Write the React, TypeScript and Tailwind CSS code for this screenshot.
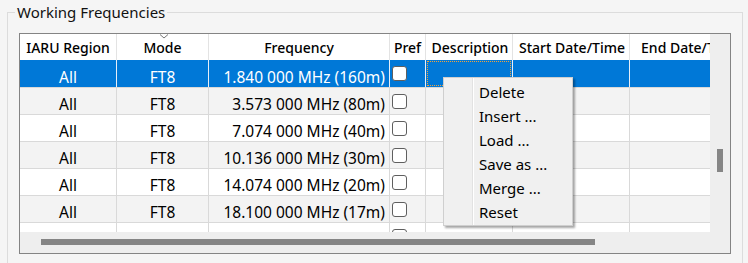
import React from "react";

const cols = [97, 92, 181, 36, 87, 117, 120];
const headers = ["IARU Region", "Mode", "Frequency", "Pref", "Description", "Start Date/Time", "End Date/Time"];
const freqs = [
  "1.840 000 MHz (160m)",
  "3.573 000 MHz (80m)",
  "7.074 000 MHz (40m)",
  "10.136 000 MHz (30m)",
  "14.074 000 MHz (20m)",
  "18.100 000 MHz (17m)",
  "21.074 000 MHz (15m)",
];
const menu = ["Delete", "Insert ...", "Load ...", "Save as ...", "Merge ...", "Reset"];

function Checkbox() {
  return <div className="w-[15px] h-[15px] rounded-[3px] border border-[#5f5f5f] bg-white" />;
}

export default function App() {
  const font = { fontFamily: '"Noto Sans", "Open Sans", sans-serif' };
  return (
    <div className="relative w-[748px] h-[263px] overflow-hidden bg-[#f5f5f5] pt-[2px] pl-[7px] text-black" style={font}>
      <fieldset className="w-[736px] border border-[#dcdcdc] p-0 m-0 pb-[12px]">
        <legend className="ml-[7px] px-[2px] text-[15px] leading-[20px] text-[#111]">Working Frequencies</legend>
        <div className="ml-[11px] mt-[11px] w-[712px] h-[221px] border border-[#848484] flex flex-col bg-[#eeeeee]">
          <div className="flex h-[198px]">
            <div className="w-[690px] h-[198px] overflow-hidden bg-white">
              <div className="w-[760px]">
                <div className="flex h-[26px] bg-white">
                  {headers.map((h, i) => (
                    <div
                      key={h}
                      style={{ width: cols[i] }}
                      className="relative shrink-0 border-r border-[#e3e3e3] flex items-center justify-center pt-[1px] text-[14px] font-medium whitespace-nowrap overflow-hidden"
                    >
                      {i === 1 && (
                        <svg className="absolute top-0 left-[42px]" width="10" height="5" viewBox="0 0 10 5">
                          <path d="M1 0.5 L5 4 L9 0.5" fill="none" stroke="#777" strokeWidth="1" />
                        </svg>
                      )}
                      <span className={i >= 4 ? "pl-[2px]" : ""}>{h}</span>
                    </div>
                  ))}
                </div>
                {freqs.map((f, r) => {
                  const sel = r === 0;
                  const bg = sel ? "bg-[#0078d7] text-white" : r % 2 === 1 ? "bg-[#f3f3f3]" : "bg-white";
                  const line = sel ? "border-[#e6eef8]" : "border-[#d9d9d9]";
                  return (
                    <div
                      key={f}
                      className={`flex text-[15.5px] border-b border-[#d9d9d9] ${bg} ${sel ? "h-[28px]" : "h-[27px]"}`}
                    >
                      <div style={{ width: cols[0] }} className={`shrink-0 border-r ${line} flex items-center justify-center pt-[8px]`}>All</div>
                      <div style={{ width: cols[1] }} className={`shrink-0 border-r ${line} flex items-center justify-center pt-[8px]`}>FT8</div>
                      <div style={{ width: cols[2] }} className={`shrink-0 border-r ${line} flex items-center justify-end pr-[4px] pt-[8px] whitespace-nowrap`}>{f}</div>
                      <div style={{ width: cols[3] }} className={`shrink-0 border-r ${line} flex items-center pl-[2px]`}>
                        <Checkbox />
                      </div>
                      <div style={{ width: cols[4] }} className={`shrink-0 border-r ${line} p-[1px]`}>
                        {sel && <div className="w-full h-full border border-dotted border-[#f2a33a]" />}
                      </div>
                      <div style={{ width: cols[5] }} className={`shrink-0 border-r ${line}`} />
                      <div style={{ width: cols[6] }} className={`shrink-0 border-r ${line}`} />
                    </div>
                  );
                })}
              </div>
            </div>
            <div className="w-[20px] h-[198px] bg-[#eeeeee] pl-[7px] pt-[115px]">
              <div className="w-[6px] h-[23px] bg-[#858585]" />
            </div>
          </div>
          <div className="h-[21px] pt-[7px] pl-[21px]">
            <div className="w-[554px] h-[6px] bg-[#858585]" />
          </div>
        </div>
      </fieldset>

      <div className="absolute left-[443px] top-[77px] w-[130px] h-[149px] bg-[#f0f0f0] border border-[#cfcfcf] shadow-[2px_2px_2px_rgba(0,0,0,0.35)] flex">
        <div className="w-[29px] border-r border-[#e2e2e2] shadow-[1px_0_0_#ffffff]" />
        <div className="flex flex-col pt-[2px] pl-[6px]">
          {menu.map((m) => (
            <div key={m} className="h-[24px] flex items-center text-[15px] whitespace-nowrap">
              {m}
            </div>
          ))}
        </div>
      </div>
    </div>
  );
}
